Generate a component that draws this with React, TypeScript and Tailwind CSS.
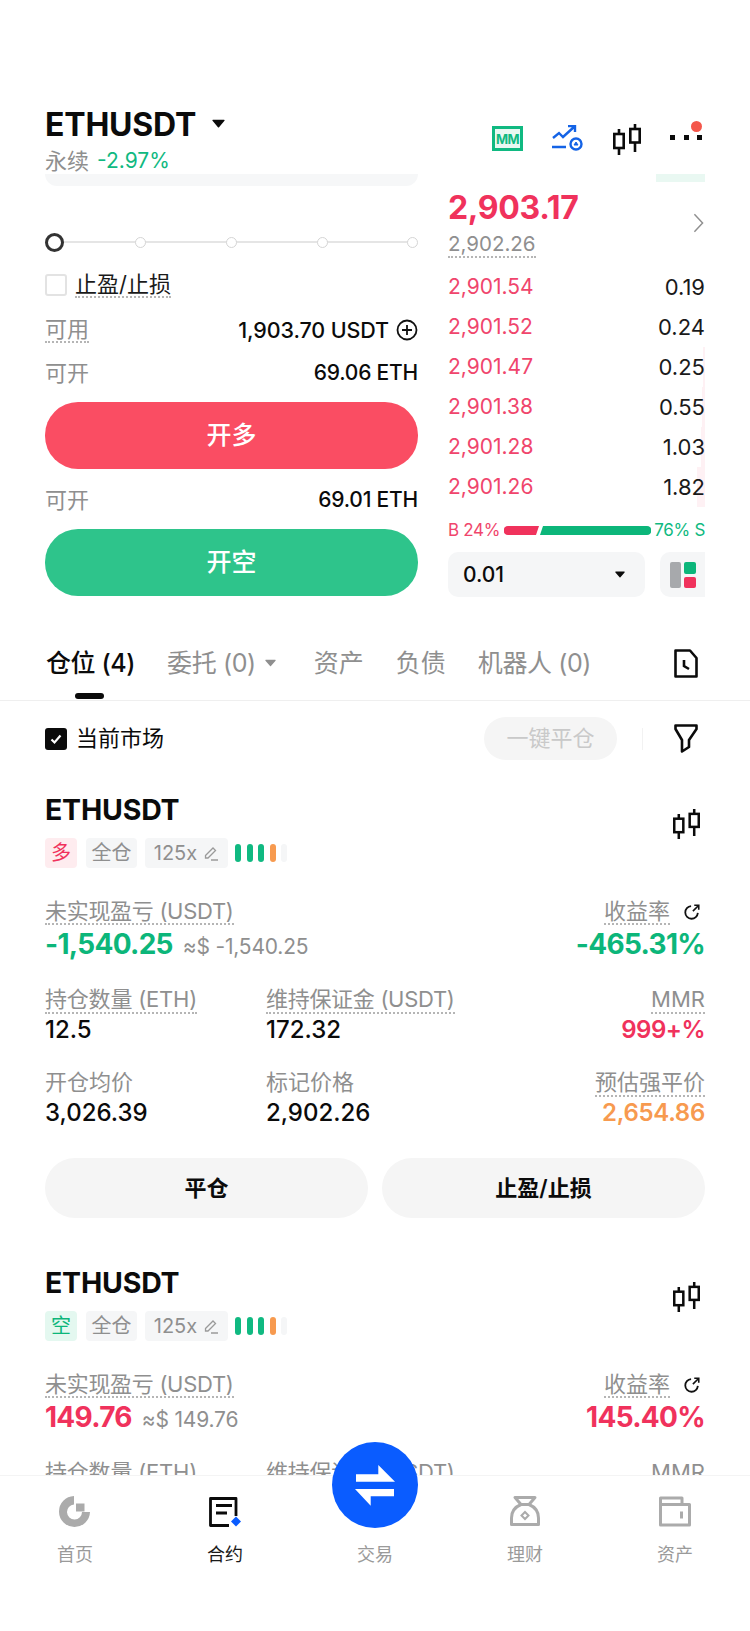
const depth = [
  { price: '2,901.54', size: '0.19', bar: 0 },
  { price: '2,901.52', size: '0.24', bar: 0 },
  { price: '2,901.47', size: '0.25', bar: 2 },
  { price: '2,901.38', size: '0.55', bar: 3 },
  { price: '2,901.28', size: '1.03', bar: 4 },
  { price: '2,901.26', size: '1.82', bar: 8 },
]

function Caret({ className }: { className: string }) {
  return (
    <svg viewBox="0 0 12 8" className={className} fill="currentColor">
      <path d="M1 0.5h10a.6.6 0 0 1 .5 1L6.5 7.4a.7.7 0 0 1-1 0L.5 1.5a.6.6 0 0 1 .5-1z" />
    </svg>
  )
}

function Candles({ className }: { className: string }) {
  return (
    <svg viewBox="0 0 28 31" className={className} fill="none" stroke="#0b0b0b" strokeWidth="2.6">
      <path d="M6 5v26M22 0v28" />
      <rect x="1.300" y="10" width="9.400" height="14" fill="#fff" />
      <rect x="17.300" y="5" width="9.400" height="13.500" fill="#fff" />
    </svg>
  )
}

function Dotted({ children, className = '' }: { children: React.ReactNode; className?: string }) {
  return <span className={`border-b-2 border-dotted border-[#b5b5b5] leading-[24px] ${className}`}>{children}</span>
}

function Share() {
  return (
    <svg viewBox="0 0 20 20" className="w-[18px] h-[18px]" fill="none" stroke="#111" strokeWidth="2">
      <path d="M9 3.500a7 7 0 1 0 7.500 7.500" />
      <path d="M11 9l6-6M12.500 2.500h5v5" strokeWidth="1.800" />
    </svg>
  )
}

interface PositionProps {
  side: string
  sideClass: string
  pnl: string
  pnlUsd: string
  pnlColor: string
  rate: string
  partial?: boolean
}

function Position({ side, sideClass, pnl, pnlUsd, pnlColor, rate, partial }: PositionProps) {
  return (
    <div className="h-[473px] px-[45px]">
      <div className="flex justify-between h-[50px] pt-[14px]">
        <div className="text-[28.500px] leading-[40px] font-bold tracking-[-0.2px] text-[#0b0b0b]">ETHUSDT</div>
        <Candles className="w-[27px] h-[30px] mt-[19px] mr-[5px]" />
      </div>
      <div className="flex items-center h-[30px] mt-[12px] text-[20px] text-[#8f8f8f]">
        <div className={`w-[32px] h-[30px] rounded flex items-center justify-center ${sideClass}`}>{side}</div>
        <div className="w-[51px] h-[30px] ml-[9px] rounded bg-[#f5f6f7] flex items-center justify-center">全仓</div>
        <div className="w-[83px] h-[30px] ml-[8px] rounded bg-[#f5f6f7] flex items-center justify-center gap-[6px]">
          125x
          <svg viewBox="0 0 16 16" className="w-[16px] h-[16px]" fill="none" stroke="#9a9a9a" strokeWidth="1.300">
            <path d="M2.500 10.500L10 3l2.500 2.500L5 13H2.500zM8 15h7" />
          </svg>
        </div>
        <div className="flex gap-[5.500px] ml-[7px]">
          <span className="w-[6px] h-[18px] rounded-full bg-[#10b981]" />
          <span className="w-[6px] h-[18px] rounded-full bg-[#10b981]" />
          <span className="w-[6px] h-[18px] rounded-full bg-[#10b981]" />
          <span className="w-[6px] h-[18px] rounded-full bg-[#f79a4f]" />
          <span className="w-[6px] h-[18px] rounded-full bg-[#f5f6f7]" />
        </div>
      </div>
      <div className="flex justify-between mt-[31px] h-[26px] text-[22px] text-[#8f8f8f]">
        <Dotted className="tracking-[-0.3px]">未实现盈亏 (USDT)</Dotted>
        <div className="flex items-center gap-[13px] pr-[4px]">
          <Dotted>收益率</Dotted>
          <Share />
        </div>
      </div>
      <div className={`flex justify-between items-baseline h-[36px] mt-[1px] leading-[36px] font-bold ${pnlColor}`}>
        <div className="flex items-baseline gap-[10px]">
          <span className="text-[28px] tracking-[-0.7px]">{pnl}</span>
          <span className="text-[21px] font-normal tracking-[-0.2px] text-[#8f8f8f]">{pnlUsd}</span>
        </div>
        <span className="text-[28px] tracking-[-0.7px]">{rate}</span>
      </div>
      <div className="grid grid-cols-[221px_1fr_auto] mt-[24px] text-[22px] leading-[26px] text-[#8f8f8f]">
        <div><Dotted className="tracking-[-0.2px]">持仓数量 (ETH)</Dotted></div>
        <div><Dotted className="tracking-[-0.3px]">维持保证金 (USDT)</Dotted></div>
        <div className="text-right"><Dotted>MMR</Dotted></div>
        {!partial && (
          <>
            <div className="text-[24px] leading-[32px] mt-[2px] font-medium text-[#0b0b0b]">12.5</div>
            <div className="text-[24px] leading-[32px] mt-[2px] font-medium text-[#0b0b0b]">172.32</div>
            <div className="text-[24px] leading-[32px] mt-[2px] font-semibold tracking-[-0.5px] text-[#f0325c] text-right">999+%</div>
            <div className="mt-[23px]">开仓均价</div>
            <div className="mt-[23px]">标记价格</div>
            <div className="mt-[23px] text-right"><Dotted>预估强平价</Dotted></div>
            <div className="text-[24px] leading-[32px] mt-[2px] font-medium text-[#0b0b0b]">3,026.39</div>
            <div className="text-[24px] leading-[32px] mt-[2px] font-medium text-[#0b0b0b]">2,902.26</div>
            <div className="text-[24px] leading-[32px] mt-[2px] font-semibold tracking-[-0.3px] text-[#f79a4f] text-right">2,654.86</div>
          </>
        )}
      </div>
      {!partial && (
        <div className="flex gap-[14px] mt-[29px]">
          <button className="flex-1 h-[60px] rounded-full bg-[#f5f5f5] text-[22px] font-semibold text-[#0b0b0b]">平仓</button>
          <button className="flex-1 h-[60px] rounded-full bg-[#f5f5f5] text-[22px] font-semibold text-[#0b0b0b]">止盈/止损</button>
        </div>
      )}
    </div>
  )
}

export default function App() {
  return (
    <div
      className="relative w-[750px] h-[1631px] overflow-hidden bg-white text-[#0b0b0b]"
      style={{ fontFamily: 'Inter, "Noto Sans CJK SC", sans-serif' }}
    >
      <div className="h-[1475px] overflow-hidden">
        {/* header */}
        <div className="flex justify-between h-[174px] pl-[45px] pr-[47px] pt-[104px]">
          <div>
            <div className="flex items-center h-[42px]">
              <span className="text-[32px] font-bold tracking-[-0.2px] leading-[42px]">ETHUSDT</span>
              <Caret className="w-[13px] h-[9px] ml-[16px] -mt-[3px]" />
            </div>
            <div className="flex items-center gap-[8px] h-[30px] text-[22px] leading-[30px]">
              <span className="text-[#8f8f8f]">永续</span>
              <span className="text-[#10b981] text-[21px]">-2.97%</span>
            </div>
          </div>
          <div className="flex items-start pt-[20px]">
            <div className="flex items-center justify-center w-[31px] h-[25px] mt-[2px] border-[3px] border-[#10b981] text-[13px] leading-[12px] font-bold tracking-[-0.5px] text-[#10b981] bg-[#e9f8f2]">MM</div>
            <svg viewBox="0 0 31 26" className="w-[31px] h-[26px] ml-[29px] mt-[1px]" fill="none" stroke="#1463e6" strokeWidth="2.400">
              <path d="M1 13l6-5 4 4 11-10M16 1h7v6M0 22h14" />
              <circle cx="24" cy="19" r="5.500" />
              <path d="M24 17l2 3h-4z" fill="#1463e6" strokeWidth="1" />
            </svg>
            <Candles className="w-[28px] h-[31px] ml-[30px]" />
            <div className="relative w-[33px] h-[31px] ml-[29px]">
              <div className="flex justify-between mt-[11px] pr-[1px]">
                <span className="w-[5px] h-[5px] bg-[#0b0b0b]" />
                <span className="w-[5px] h-[5px] bg-[#0b0b0b]" />
                <span className="w-[5px] h-[5px] bg-[#0b0b0b]" />
              </div>
              <span className="absolute right-[1px] -top-[3px] w-[11px] h-[11px] rounded-full bg-[#f4574b]" />
            </div>
          </div>
        </div>

        {/* order form + book */}
        <div className="flex pl-[45px] h-[437px]">
          <div className="w-[373px] text-[22px]">
            <div className="h-[12px] rounded-b-xl bg-[#f6f7f8]" />
            <div className="relative flex items-center h-[20px] mt-[46px]">
              <div className="absolute left-[10px] right-[4px] h-[2px] bg-[#e5e5e5]" />
              <span className="relative w-[19px] h-[19px] rounded-full border-[3px] border-[#333] bg-white" />
              <span className="relative w-[11px] h-[11px] rounded-full border border-[#d5d5d5] bg-white ml-[71px]" />
              <span className="relative w-[11px] h-[11px] rounded-full border border-[#d5d5d5] bg-white ml-[80px]" />
              <span className="relative w-[11px] h-[11px] rounded-full border border-[#d5d5d5] bg-white ml-[80px]" />
              <span className="relative w-[11px] h-[11px] rounded-full border border-[#d5d5d5] bg-white ml-[79px]" />
            </div>
            <div className="flex items-center h-[24px] mt-[21px]">
              <span className="w-[22px] h-[22px] rounded-[3px] border-2 border-[#e3e3e3]" />
              <Dotted className="ml-[8px] text-[#1a1a1a]">止盈/止损</Dotted>
            </div>
            <div className="flex items-center justify-between h-[24px] mt-[21px]">
              <Dotted className="text-[#8f8f8f]">可用</Dotted>
              <div className="flex items-center gap-[7px] text-[21.500px] font-medium tracking-[-0.1px]">
                1,903.70 USDT
                <svg viewBox="0 0 22 22" className="w-[22px] h-[22px]" fill="none" stroke="#111" strokeWidth="1.800">
                  <circle cx="11" cy="11" r="9.500" />
                  <path d="M11 6v10M6 11h10" />
                </svg>
              </div>
            </div>
            <div className="flex items-center justify-between h-[24px] mt-[19px]">
              <span className="text-[#8f8f8f]">可开</span>
              <span className="text-[21px] font-medium tracking-[-0.2px]">69.06 ETH</span>
            </div>
            <button className="block w-full h-[67px] mt-[17px] rounded-[33px] bg-[#fa4d63] text-white text-[25px] font-medium">开多</button>
            <div className="flex items-center justify-between h-[24px] mt-[19px]">
              <span className="text-[#8f8f8f]">可开</span>
              <span className="text-[21px] font-medium tracking-[-0.2px]">69.01 ETH</span>
            </div>
            <button className="block w-full h-[67px] mt-[17px] rounded-[33px] bg-[#2ec48b] text-white text-[25px] font-medium">开空</button>
          </div>

          <div className="w-[257px] ml-[30px] overflow-hidden">
            <div className="h-[8px] w-[49px] ml-auto bg-[#e9f8f2]" />
            <div className="flex items-center justify-between h-[40px] mt-[6px]">
              <span className="text-[32px] font-bold tracking-[-0.3px] text-[#f0325c]">2,903.17</span>
              <svg viewBox="0 0 12 22" className="w-[11px] h-[20px] mr-[1px] mt-[30px]" fill="none" stroke="#8f8f8f" strokeWidth="1.600">
                <path d="M1.500 1.500L10.500 11l-9 9.500" />
              </svg>
            </div>
            <div className="h-[24px] mt-[1px] text-[20.500px] text-[#8f8f8f]">
              <Dotted>2,902.26</Dotted>
            </div>
            <div className="mt-[14px]">
              {depth.map((row) => (
                <div key={row.price} className="relative flex items-center justify-between h-[40px] text-[21px]">
                  <span className="text-[#f0456c]">{row.price}</span>
                  <span className="relative z-10 text-[22px] text-[#1a1a1a]">{row.size}</span>
                  {row.bar > 0 && (
                    <span className="absolute right-0 inset-y-0 bg-[#fde8ec] opacity-60" style={{ width: row.bar }} />
                  )}
                </div>
              ))}
            </div>
            <div className="flex items-center justify-between h-[20px] mt-[13px] text-[17px] leading-[20px] tracking-[-0.3px]">
              <span className="text-[#f0456c] whitespace-nowrap">B 24%</span>
              <svg viewBox="0 0 147 9" className="w-[147px] h-[9px] shrink-0">
                <path d="M4 0h31l-3 9H4a4 4 0 0 1 0-9z" fill="#f0325c" />
                <path d="M39 0h104a4.500 4.500 0 0 1 0 9H36z" fill="#0cb67a" />
              </svg>
              <span className="text-[#10b981] whitespace-nowrap">76% S</span>
            </div>
            <div className="flex h-[45px] mt-[12px]">
              <div className="flex items-center justify-between w-[197px] shrink-0 rounded-[10px] bg-[#f5f6f7] pl-[15px] pr-[20px] text-[21px] font-medium">
                0.01
                <Caret className="w-[10px] h-[7px]" />
              </div>
              <div className="flex gap-[3px] w-[60px] shrink-0 ml-[15px] rounded-[10px] bg-[#f5f6f7] pl-[10px] pt-[10px]">
                <span className="w-[11px] h-[26px] rounded-[2px] bg-[#a7a9ac]" />
                <div className="flex flex-col gap-[3px]">
                  <span className="w-[12px] h-[11.500px] rounded-[2px] bg-[#0cb67a]" />
                  <span className="w-[12px] h-[11.500px] rounded-[2px] bg-[#f0325c]" />
                </div>
              </div>
            </div>
          </div>
        </div>

        {/* tabs */}
        <div className="flex items-center h-[90px] pt-[15px] pl-[46px] pr-[52px] border-b border-[#efefef] text-[25px] leading-[36px] text-[#8f8f8f]">
          <div className="relative font-medium text-[#0b0b0b] whitespace-nowrap tracking-[-0.4px]">
            仓位 (4)
            <span className="absolute left-[29px] bottom-[-18px] w-[29px] h-[6px] rounded-full bg-[#0b0b0b]" />
          </div>
          <span className="ml-[32px] whitespace-nowrap tracking-[-0.4px]">委托 (0)</span>
          <Caret className="w-[11px] h-[8px] ml-[9px] text-[#8f8f8f]" />
          <span className="ml-[38px]">资产</span>
          <span className="ml-[32px]">负债</span>
          <span className="ml-[32px] whitespace-nowrap tracking-[-0.4px]">机器人 (0)</span>
          <svg viewBox="0 0 24 29" className="w-[24px] h-[29px] ml-auto" fill="none" stroke="#0b0b0b" strokeWidth="2.600">
            <path d="M1.500 1.500H16L22.500 9V27.500H1.500Z" strokeLinejoin="round" />
            <path d="M10 11V17L15 20" />
          </svg>
        </div>

        {/* filter row */}
        <div className="flex items-center h-[75px] pl-[45px] pr-[52px]">
          <span className="flex items-center justify-center w-[22px] h-[22px] rounded-[3px] bg-[#0b0b0b]">
            <svg viewBox="0 0 14 14" className="w-[14px] h-[14px]" fill="none" stroke="#fff" strokeWidth="2.200">
              <path d="M2.500 7.500l3 3 6-7" />
            </svg>
          </span>
          <span className="ml-[9px] text-[22px]">当前市场</span>
          <button className="ml-auto w-[133px] h-[43px] rounded-full bg-[#f5f5f5] text-[22px] text-[#c9c9c9]">一键平仓</button>
          <span className="w-[1px] h-[22px] ml-[25px] bg-[#f2f2f2]" />
          <svg viewBox="0 0 24 29" className="w-[24px] h-[29px] ml-[31px]" fill="none" stroke="#0b0b0b" strokeWidth="2.600">
            <path d="M1.500 1.500H22.500V5L15 16V23L8 27.500V16L1.500 5Z" strokeLinejoin="round" />
          </svg>
        </div>

        <Position
          side="多"
          sideClass="bg-[#feecef] text-[#f0325c]"
          pnl="-1,540.25"
          pnlUsd="≈$ -1,540.25"
          pnlColor="text-[#0cb67a]"
          rate="-465.31%"
        />
        <Position
          side="空"
          sideClass="bg-[#e4f8f0] text-[#0cb67a]"
          pnl="149.76"
          pnlUsd="≈$ 149.76"
          pnlColor="text-[#f0325c]"
          rate="145.40%"
          partial
        />
      </div>

      {/* bottom nav */}
      <div className="absolute left-0 right-0 bottom-0 h-[156px] bg-white border-t border-[#f4f4f4] grid grid-cols-5 text-[18px] text-[#9a9a9a]">
        <div className="flex flex-col items-center pt-[20px]">
          <svg viewBox="0 0 32 31" className="w-[32px] h-[31px]" fill="#ababab">
            <path d="M15 0A15.500 15.500 0 1 0 31 16H23A7.500 7.500 0 1 1 15 8.500Z" />
            <rect x="17" y="7.500" width="8.500" height="8" />
          </svg>
          <span className="mt-[18px] leading-[20px]">首页</span>
        </div>
        <div className="flex flex-col items-center pt-[20px] text-[#1a1a1a]">
          <svg viewBox="0 0 32 31" className="w-[32px] h-[31px]" fill="none" stroke="#0b0b0b" strokeWidth="2.800">
            <path d="M27 20V2.500H1.500V29.500H20" strokeLinejoin="round" />
            <path d="M7 9.500H23M7 17H18" />
            <path d="M27 20.500l5 5-5 5-5-5z" fill="#0a5cff" stroke="none" />
          </svg>
          <span className="mt-[18px] leading-[20px]">合约</span>
        </div>
        <div className="flex flex-col items-center pt-[69px]">
          <span className="leading-[20px]">交易</span>
        </div>
        <div className="flex flex-col items-center pt-[20px]">
          <svg viewBox="0 0 32 31" className="w-[32px] h-[31px]" fill="none" stroke="#ababab" strokeWidth="3">
            <path d="M6 1.500H26L20 8.500H12Z" strokeLinejoin="round" />
            <path d="M12 8.500C6 11 2.500 16 2.500 22V28.500H29.500V22C29.500 16 26 11 20 8.500" strokeLinejoin="round" />
            <path d="M16 16l3.500 3.500L16 23l-3.500-3.500z" strokeWidth="2" />
          </svg>
          <span className="mt-[18px] leading-[20px]">理财</span>
        </div>
        <div className="flex flex-col items-center pt-[20px]">
          <svg viewBox="0 0 32 31" className="w-[32px] h-[31px]" fill="none" stroke="#ababab" strokeWidth="3">
            <path d="M1.500 29V2H23V8.500H30.500V29Z" strokeLinejoin="round" />
            <path d="M1.500 8.500H23M22.500 15.500V22.500" />
          </svg>
          <span className="mt-[18px] leading-[20px]">资产</span>
        </div>
      </div>

      {/* trade button */}
      <div className="absolute left-[332px] top-[1442px] w-[86px] h-[86px] rounded-full bg-[#0a5cff]">
        <svg viewBox="0 0 86 86" className="w-[86px] h-[86px]" fill="#fff">
          <path d="M24 32.300H46.300V23L63 39.700H24Z" />
          <path d="M62 47V54.300H38.700V63.700L23 47Z" />
        </svg>
      </div>
    </div>
  )
}
